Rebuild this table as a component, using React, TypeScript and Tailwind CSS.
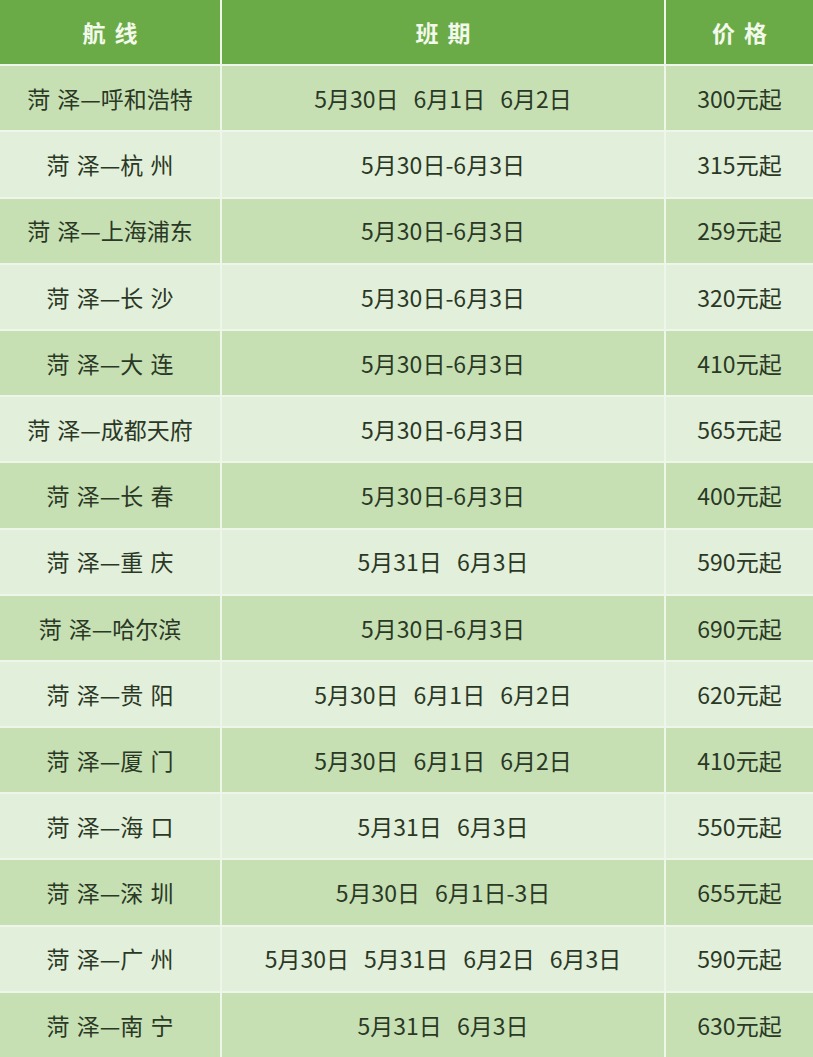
const rows = [
  { route: "菏 泽—呼和浩特", dates: ["5月30日", "6月1日", "6月2日"], price: "300元起" },
  { route: "菏 泽—杭 州", dates: ["5月30日-6月3日"], price: "315元起" },
  { route: "菏 泽—上海浦东", dates: ["5月30日-6月3日"], price: "259元起" },
  { route: "菏 泽—长 沙", dates: ["5月30日-6月3日"], price: "320元起" },
  { route: "菏 泽—大 连", dates: ["5月30日-6月3日"], price: "410元起" },
  { route: "菏 泽—成都天府", dates: ["5月30日-6月3日"], price: "565元起" },
  { route: "菏 泽—长 春", dates: ["5月30日-6月3日"], price: "400元起" },
  { route: "菏 泽—重 庆", dates: ["5月31日", "6月3日"], price: "590元起" },
  { route: "菏 泽—哈尔滨", dates: ["5月30日-6月3日"], price: "690元起" },
  { route: "菏 泽—贵 阳", dates: ["5月30日", "6月1日", "6月2日"], price: "620元起" },
  { route: "菏 泽—厦 门", dates: ["5月30日", "6月1日", "6月2日"], price: "410元起" },
  { route: "菏 泽—海 口", dates: ["5月31日", "6月3日"], price: "550元起" },
  { route: "菏 泽—深 圳", dates: ["5月30日", "6月1日-3日"], price: "655元起" },
  { route: "菏 泽—广 州", dates: ["5月30日", "5月31日", "6月2日", "6月3日"], price: "590元起" },
  { route: "菏 泽—南 宁", dates: ["5月31日", "6月3日"], price: "630元起" },
]

const cell = "flex items-center justify-center"
const head = `${cell} bg-[#6aab48] font-bold text-[#f3f9ea] whitespace-pre [word-spacing:4px]`

export default function App() {
  return (
    <div
      className="h-[1057px] w-[813px] bg-[#eef6e9] text-[23px] text-[#2a3825]"
      style={{ fontFamily: '"Noto Sans CJK SC", "Noto Sans", sans-serif' }}
    >
      <div className="grid h-full grid-cols-[220px_442px_1fr] grid-rows-[repeat(16,1fr)] gap-[2px]">
        <div className={head}>航 线</div>
        <div className={head}>班 期</div>
        <div className={head}>价 格</div>

        {rows.map((r, i) => {
          const bg = i % 2 === 0 ? "bg-[#c6e0b4]" : "bg-[#e2efda]"
          return (
            <div key={i} className="contents">
              <div className={`${cell} ${bg} whitespace-pre [word-spacing:2px]`}>{r.route}</div>
              <div className={`${cell} ${bg} gap-[15px]`}>
                {r.dates.map((d) => (
                  <span key={d}>{d}</span>
                ))}
              </div>
              <div className={`${cell} ${bg}`}>{r.price}</div>
            </div>
          )
        })}
      </div>
    </div>
  )
}
